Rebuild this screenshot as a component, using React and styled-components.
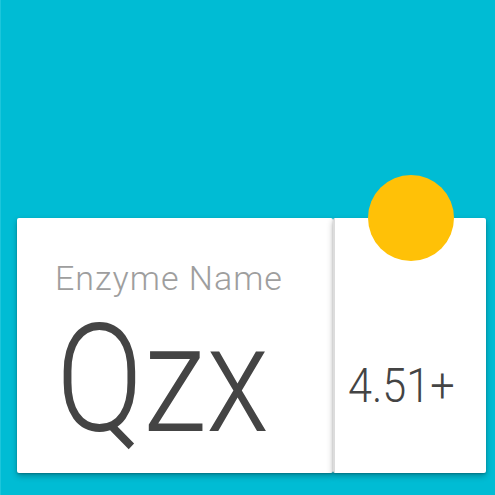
import React from "react";
import styled, { createGlobalStyle } from "styled-components";

const Global = createGlobalStyle`
  html, body { margin: 0; padding: 0; }
  body { background: #00bcd4; font-family: Roboto, "Noto Sans", sans-serif; }
`;

const Page = styled.div`
  width: 495px;
  height: 495px;
  box-sizing: border-box;
  background: #00bcd4;
  border-left: 1px solid #1cc6db;
  padding: 218px 0 0 16px;
  overflow: hidden;
`;

const Row = styled.div`
  display: flex;
`;

const Card = styled.div`
  position: relative;
  box-sizing: border-box;
  width: ${(p) => p.$w}px;
  height: 255px;
  background: #fff;
  border-radius: 2px;
  box-shadow: 0 3px 6px rgba(0, 0, 0, 0.28), 0 1px 2px rgba(0, 0, 0, 0.2);
`;

const NameCard = styled(Card)`
  padding: 43px 0 0 38px;
`;

const ValueCard = styled(Card)`
  padding: 144px 0 0 13px;
  border-left: 2px solid #dcdcdc;
`;

const Label = styled.div`
  font-family: Roboto, sans-serif;
  font-weight: 300;
  font-size: 34px;
  line-height: 1;
  letter-spacing: 1px;
  color: #9e9e9e;
`;

const Symbol = styled.div`
  margin-top: 10px;
  margin-left: 1px;
  font-family: Roboto, sans-serif;
  font-weight: 300;
  font-size: 150px;
  line-height: 1;
  color: #444;
  transform: scaleX(0.86);
  transform-origin: left center;
`;

const Value = styled.div`
  font-family: Roboto, sans-serif;
  font-weight: 300;
  font-size: 48px;
  line-height: 1;
  color: #444;
  transform: scaleX(0.9);
  transform-origin: left center;
`;

const Dot = styled.div`
  position: absolute;
  top: -43px;
  left: 33px;
  width: 86px;
  height: 86px;
  border-radius: 50%;
  background: #ffc107;
`;

export default function App() {
  return (
    <>
      <Global />
      <Page>
        <Row>
          <NameCard $w={316}>
            <Label>Enzyme Name</Label>
            <Symbol>Qzx</Symbol>
          </NameCard>
          <ValueCard $w={153}>
            <Dot />
            <Value>4.51+</Value>
          </ValueCard>
        </Row>
      </Page>
    </>
  );
}
